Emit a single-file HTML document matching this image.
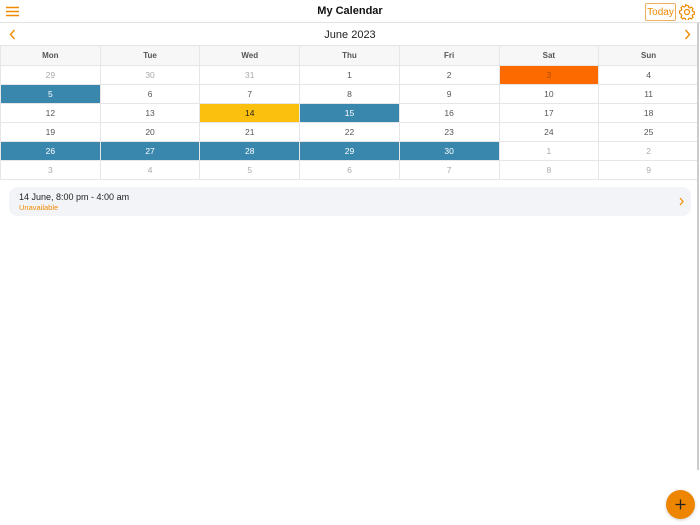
<!DOCTYPE html>
<html><head><style>
*{margin:0;padding:0;box-sizing:border-box}
body{width:700px;height:525px;background:#fff;font-family:"Liberation Sans",sans-serif;position:relative;overflow:hidden;color:#333}
.hdr{position:absolute;left:0;top:0;width:700px;height:23px;border-bottom:1px solid #e2e2e2}
.title{position:absolute;left:0;right:0;top:5px;text-align:center;font-weight:bold;font-size:11px;color:#111}
.today{position:absolute;left:645px;top:3px;width:31px;height:18px;border:1px solid #f0b060;border-radius:2px;color:#f08a00;font-size:10px;text-align:center;line-height:18px}
.month{position:absolute;top:29px;left:0;right:0;text-align:center;font-size:11px;color:#222}
table{position:absolute;left:0;top:45px;border-collapse:collapse;width:699px;table-layout:fixed}
td,th{border:1px solid #e6e6e6;text-align:center;font-size:8.5px;height:19px;color:#555;font-weight:normal}
th{background:#f7f7f7;font-weight:bold;height:20px;color:#555;font-size:8px}
.g{color:#aaa}.b{background:#3987ad;color:#fff}.o{background:#fd6b00;color:#b04a00}.y{background:#fbbf0e;color:#222}
.card{position:absolute;left:9px;top:187px;width:682px;height:29px;background:#f3f4f8;border-radius:9px}
.card .t{position:absolute;left:10px;top:5px;font-size:9px;color:#222}
.card .s{position:absolute;left:10px;top:16px;font-size:7.5px;color:#f08a00}
.sb{position:absolute;left:697px;top:23px;width:2px;height:447px;background:#ccc}
.fab{position:absolute;left:666px;top:490px;width:29px;height:29px;border-radius:50%;background:#ee8500;box-shadow:0 1px 3px rgba(0,0,0,.2)}
</style></head><body>
<div class="hdr">
<svg style="position:absolute;left:6px;top:6px" width="13" height="11"><path d="M0 1.5H13M0 5.5H13M0 9.5H13" stroke="#f08a00" stroke-width="1.6"/></svg>
<div class="title">My Calendar</div>
<div class="today">Today</div>
<svg style="position:absolute;left:679px;top:4px" width="16" height="16" viewBox="0 0 16 16"><path d="M8 1.5l1.3.2.4 1.6 1.2.6 1.5-.8 1.6 1.6-.8 1.5.6 1.2 1.6.4v2.4l-1.6.4-.6 1.2.8 1.5-1.6 1.6-1.5-.8-1.2.6-.4 1.6H6.7l-.4-1.6-1.2-.6-1.5.8-1.6-1.6.8-1.5-.6-1.2L.6 9.2V6.8l1.6-.4.6-1.2L2 3.7l1.6-1.6 1.5.8 1.2-.6.4-1.6z" fill="none" stroke="#f08a00" stroke-width="1.2"/><circle cx="8" cy="8" r="2.5" fill="none" stroke="#f08a00" stroke-width="1.2"/></svg>
</div>
<svg style="position:absolute;left:9px;top:29px" width="7" height="11"><path d="M5.5 1L1.5 5.5 5.5 10" fill="none" stroke="#f08a00" stroke-width="1.4"/></svg>
<div class="month">June 2023</div>
<svg style="position:absolute;left:684px;top:29px" width="7" height="11"><path d="M1.5 1L5.5 5.5 1.5 10" fill="none" stroke="#f08a00" stroke-width="1.4"/></svg>
<table>
<tr><th>Mon</th><th>Tue</th><th>Wed</th><th>Thu</th><th>Fri</th><th>Sat</th><th>Sun</th></tr>
<tr><td class="g">29</td><td class="g">30</td><td class="g">31</td><td>1</td><td>2</td><td class="o">3</td><td>4</td></tr>
<tr><td class="b">5</td><td>6</td><td>7</td><td>8</td><td>9</td><td>10</td><td>11</td></tr>
<tr><td>12</td><td>13</td><td class="y">14</td><td class="b">15</td><td>16</td><td>17</td><td>18</td></tr>
<tr><td>19</td><td>20</td><td>21</td><td>22</td><td>23</td><td>24</td><td>25</td></tr>
<tr><td class="b">26</td><td class="b">27</td><td class="b">28</td><td class="b">29</td><td class="b">30</td><td class="g">1</td><td class="g">2</td></tr>
<tr><td class="g">3</td><td class="g">4</td><td class="g">5</td><td class="g">6</td><td class="g">7</td><td class="g">8</td><td class="g">9</td></tr>
</table>
<div class="card"><div class="t">14 June, 8:00 pm - 4:00 am</div><div class="s">Unavailable</div>
<svg style="position:absolute;left:670px;top:10px" width="5" height="9"><path d="M1 1L4 4.5 1 8" fill="none" stroke="#f08a00" stroke-width="1.2"/></svg></div>
<div class="sb"></div>
<div class="fab"><svg width="29" height="29"><path d="M14.5 9.5V19.5M9.5 14.5H19.5" stroke="#222" stroke-width="1.3"/></svg></div>
</body></html>
